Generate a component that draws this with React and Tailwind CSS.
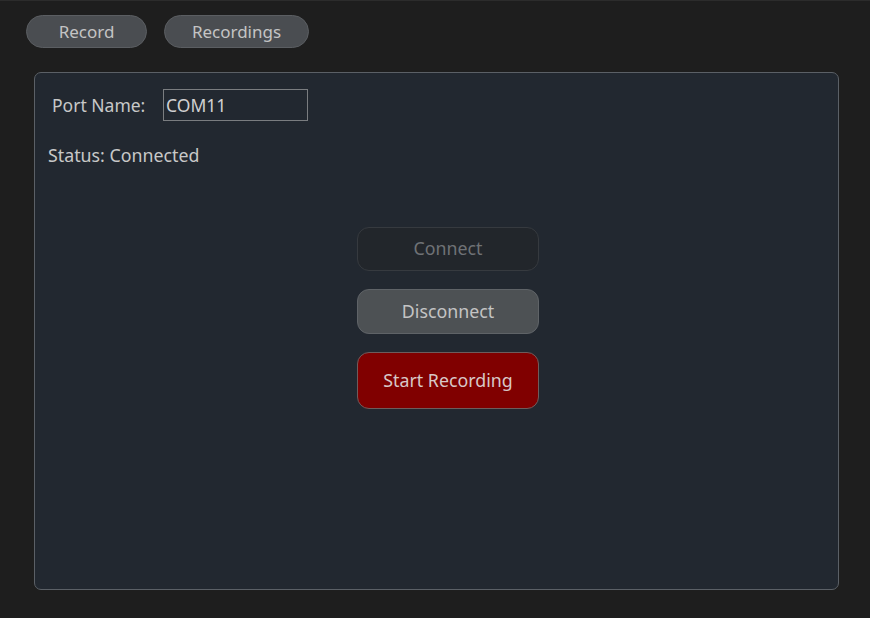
export default function App() {
  return (
    <div
      className="w-[870px] h-[618px] bg-[#1e1e1e] border-t border-[#2c2c2c] flex flex-col text-[#c8c8c8] overflow-hidden"
      style={{ fontFamily: '"Noto Sans", "Open Sans", sans-serif' }}
    >
      {/* Tabs */}
      <div className="flex items-center gap-[17px] pl-[26px] pt-[14px]">
        <button className="w-[121px] h-[33px] rounded-full bg-[#4a4d51] border border-[#5b5e62] text-[17px] text-[#c4c4c4]">
          Record
        </button>
        <button className="w-[145px] h-[33px] rounded-full bg-[#4a4d51] border border-[#5b5e62] text-[17px] text-[#c4c4c4]">
          Recordings
        </button>
      </div>

      {/* Panel */}
      <div className="ml-[34px] mt-[24px] w-[805px] h-[518px] rounded-[7px] bg-[#222830] border border-[#5b6066] flex flex-col">
        <div className="flex items-center pl-[17px] pt-[16px]">
          <span className="text-[17.5px] text-[#c8c8c8] w-[111px]">Port Name:</span>
          <div className="w-[145px] h-[32px] border border-[#7a7d80] flex items-center pl-[2px] text-[17.5px] text-[#d0d0d0]">
            COM11
          </div>
        </div>
        <div className="pl-[13px] mt-[21px] text-[17.8px] text-[#c8c8c8]">Status: Connected</div>

        <div className="flex flex-col items-start pl-[322px] mt-[58px] gap-[18px]">
          <button className="w-[182px] h-[44px] rounded-[12px] bg-[#22262b] border border-[#363a3f] text-[17.8px] text-[#6f7276]">
            Connect
          </button>
          <button className="w-[182px] h-[45px] rounded-[12px] bg-[#4d5154] border border-[#5f6367] text-[17.8px] text-[#c4c4c4]">
            Disconnect
          </button>
          <button className="w-[182px] h-[57px] rounded-[12px] bg-[#800000] border border-[#6e5c5c] text-[17.8px] text-[#d8c8c8]">
            Start Recording
          </button>
        </div>
      </div>
    </div>
  )
}
